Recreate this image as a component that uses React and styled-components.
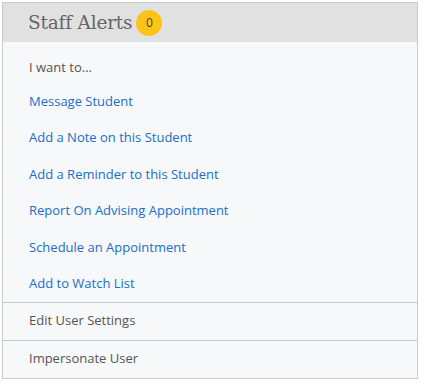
import React from 'react';
import styled, { createGlobalStyle } from 'styled-components';

const GlobalStyle = createGlobalStyle`
	body {
		margin: 0;
		background: #fff;
		font-family: "Open Sans", "DejaVu Sans", sans-serif;
	}
`;

const links = [
	'Message Student',
	'Add a Note on this Student',
	'Add a Reminder to this Student',
	'Report On Advising Appointment',
	'Schedule an Appointment',
	'Add to Watch List',
];

const footerItems = ['Edit User Settings', 'Impersonate User'];

function App() {
	return (
		<>
			<GlobalStyle />
			<Panel>
				<Header>
					<Title>Staff Alerts</Title>
					<Badge>0</Badge>
				</Header>
				<Menu>
					<MenuLabel>I want to...</MenuLabel>
					{links.map((label) => (
						<MenuLink key={label} href="#">{label}</MenuLink>
					))}
				</Menu>
				{footerItems.map((label) => (
					<FooterItem key={label}>{label}</FooterItem>
				))}
			</Panel>
		</>
	);
}

export default App;

// Styles
const Panel = styled.div`
	box-sizing: border-box;
	width: 416px;
	margin: 2px 0 0 2px;
	border: 1px solid #cbcbcb;
	background: #f7f8fa;
`;
const Header = styled.div`
	display: flex;
	align-items: center;
	gap: 4px;
	height: 39px;
	padding: 0 0 0 25px;
	background: #e1e1e1;
`;
const Title = styled.h2`
	margin: 0;
	font-family: "DejaVu Serif", serif;
	font-size: 18.5px;
	font-weight: 400;
	color: #666;
	letter-spacing: -0.2px;
`;
const Badge = styled.span`
	display: flex;
	align-items: center;
	justify-content: center;
	width: 26px;
	height: 26px;
	border-radius: 50%;
	background: #fcc419;
	color: #444;
	font-size: 12px;
`;
const Menu = styled.div`
	display: flex;
	flex-direction: column;
	padding: 0 0 1px;
`;
const MenuLabel = styled.div`
	padding: 9px 0 0 26px;
	line-height: 32px;
	font-size: 13px;
	color: #555;
`;
const MenuLink = styled.a`
	display: block;
	padding-left: 26px;
	line-height: 36.4px;
	font-size: 13px;
	color: #1a6ec6;
	text-decoration: none;
`;
const FooterItem = styled.div`
	border-top: 1px solid #cbcbcb;
	padding: 0 0 2px 26px;
	line-height: 35px;
	font-size: 13px;
	color: #555;
`;
